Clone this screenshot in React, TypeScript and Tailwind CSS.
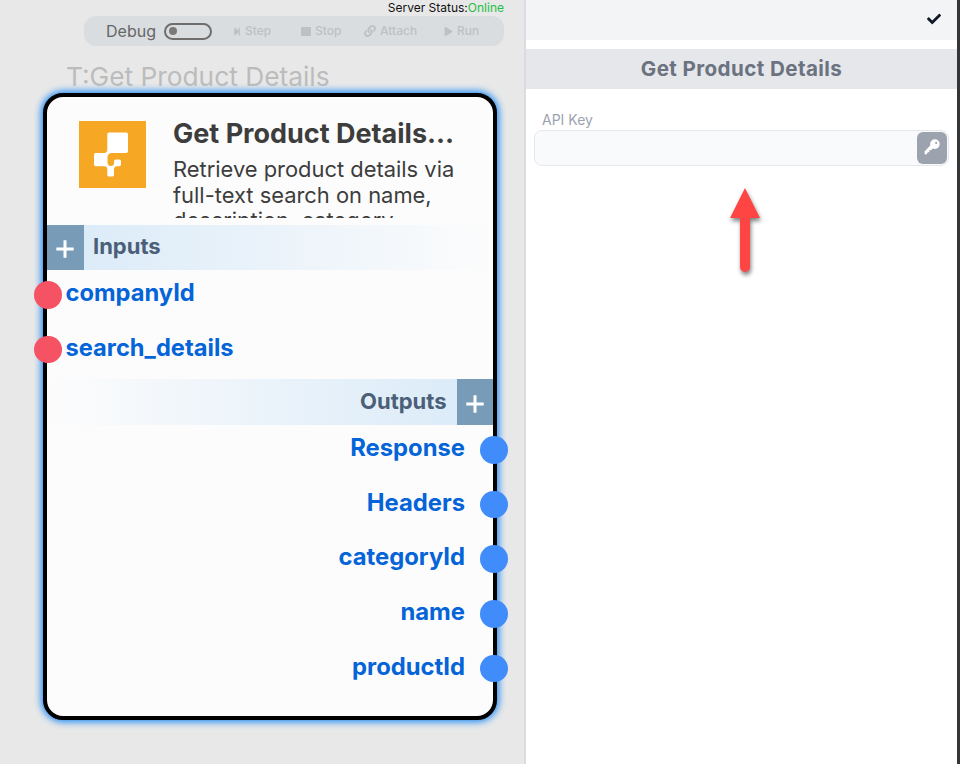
import React from "react";
import { FaCheck, FaLink, FaPlay, FaStepForward } from "react-icons/fa";

const inputs = ["companyId", "search_details"];
const outputs = ["Response", "Headers", "categoryId", "name", "productId"];

function Plus() {
  return (
    <div className="flex h-full w-[36.500px] shrink-0 items-center justify-center bg-[#789cb8] pt-[3px]">
      <svg width="18" height="18" viewBox="0 0 18 18" stroke="#fff" strokeWidth="3">
        <path d="M9 0.3V17.7M0.3 9H17.7" />
      </svg>
    </div>
  );
}

function Logo() {
  return (
    <svg className="mt-[24px] h-[67px] w-[67px] shrink-0" viewBox="0 0 67 67">
      <rect width="67" height="67" fill="#f6a724" />
      <path
        fill="#fff"
        d="M30 11.5H47.3Q49 11.5 49 13.2V30.3Q49 32 47.3 32H33Q28.500 32 28.500 36.500V40.500Q28.500 45 32 45Q35 45 35 42V40.300Q35 38.500 36.800 38.500H40.400Q42 38.500 42 40.300V43.500Q42 45.300 40.200 45.300H38Q35 45.300 35 48.500V54Q35 55.600 33.300 55.600H30Q28.300 55.600 28.300 54V48.500Q28.300 45.300 25 45.300H16.600Q15 45.300 15 43.600V33.700Q15 32 16.600 32H25Q28.300 32 28.300 28.500V13.200Q28.300 11.500 30 11.500Z"
      />
    </svg>
  );
}

function Key() {
  return (
    <svg width="16" height="16" viewBox="0 0 16 16" fill="#fff">
      <path d="M6.4 6.2L0.600 12.400V15.200H2.900L3.500 13.500L5.200 12.900L5.500 11.300L7.300 10.900L9 9.500Z" />
      <circle cx="10.900" cy="5.100" r="4.800" />
      <circle cx="12.200" cy="3.900" r="1.100" fill="#9ca3af" />
    </svg>
  );
}

function Toolbar() {
  return (
    <div className="ml-[84px] flex h-[30px] w-[420px] items-center rounded-[12px] bg-[#d9dde0] font-medium text-[12px] text-[#bfc0c1]">
      <span className="ml-[22px] w-[58px] text-[16px] font-normal text-[#666]">Debug</span>
      <span className="flex h-[17px] w-[48px] items-center rounded-full border-2 border-[#706e6c] pl-[3px]">
        <span className="h-[8px] w-[8px] rounded-full bg-[#7b7a79]" />
      </span>
      <span className="ml-[21px] flex w-[68px] items-center">
        <FaStepForward className="mr-[4px] h-[9px] w-[8px]" />Step
      </span>
      <span className="flex w-[63px] items-center">
        <span className="mr-[4px] h-[9px] w-[10px] bg-[#bfc0c1]" />Stop
      </span>
      <span className="flex w-[80px] items-center">
        <FaLink className="mr-[4px] h-[12px] w-[12px]" />Attach
      </span>
      <span className="flex items-center">
        <FaPlay className="mr-[4px] h-[9px] w-[9px]" />Run
      </span>
    </div>
  );
}

function NodeCard() {
  return (
    <div className="ml-[43px] mt-[1px] flex h-[627px] w-[454px] flex-col rounded-[20px] border-[4px] border-black bg-[#fcfcfc] shadow-[0_0_7px_2px_#1f8bf5]">
      <div className="flex h-[127.500px] shrink-0 pl-[32px]">
        <Logo />
        <div className="ml-[27px] mt-[18px] h-[103px] w-[300px] overflow-hidden text-[#3d3d3d]">
          <div className="h-[41px] text-[27px] font-bold leading-[37px]">Get Product Details…</div>
          <div className="text-[21.900px] leading-[26px]">
            <p>Retrieve product details via</p>
            <p>full-text search on name,</p>
            <p className="-mt-[1px]">description, category</p>
          </div>
        </div>
      </div>
      <div className="flex h-[45.500px] shrink-0 bg-linear-to-r from-[#d9eaf8] to-[#fcfcfc] text-[22px] font-bold leading-[43px] text-[#4b6078]">
        <Plus />
        <span className="ml-[9.500px]">Inputs</span>
      </div>
      <div className="flex h-[109px] shrink-0 flex-col">
        {inputs.map((name) => (
          <div key={name} className="-ml-[13px] flex h-[54.700px] shrink-0 items-start">
            <span className="mt-[11px] h-[27.500px] w-[27.500px] rounded-full bg-[#f55264]" />
            <span className="ml-[4px] text-[23.700px] font-bold leading-[46px] text-[#0464d8]">{name}</span>
          </div>
        ))}
      </div>
      <div className="flex h-[46px] shrink-0 justify-end bg-linear-to-l from-[#d9eaf8] to-[#fcfcfc] text-[22px] font-bold leading-[44px] text-[#4b6078]">
        <span className="mr-[10px]">Outputs</span>
        <Plus />
      </div>
      <div className="flex flex-col">
        {outputs.map((name) => (
          <div key={name} className="-mr-[14.500px] flex h-[54.700px] shrink-0 items-start justify-end">
            <span className="mr-[15px] text-[23.800px] font-bold leading-[46px] text-[#0464d8]">{name}</span>
            <span className="mt-[11px] h-[27.500px] w-[27.500px] rounded-full bg-[#3f8cfa]" />
          </div>
        ))}
      </div>
    </div>
  );
}

function Panel() {
  return (
    <section className="flex h-full w-[431px] flex-col bg-white">
      <div className="flex h-[40px] items-center justify-end bg-[#f3f4f6] pb-[2px] pr-[16px]">
        <FaCheck className="h-[14px] w-[14px] text-[#111827]" />
      </div>
      <h1 className="mt-[9px] h-[40px] bg-[#e5e7eb] text-center text-[20.600px] font-bold leading-[39px] tracking-[0.400px] text-[#6b7280]">
        Get Product Details
      </h1>
      <label className="ml-[16px] mt-[21px] h-[20px] text-[14px] leading-[20px] text-[#9ca3af]">API Key</label>
      <div className="ml-[8px] flex h-[36px] w-[415px] items-center justify-end rounded-[8px] border border-[#e5e7eb] bg-[#f9fafb] pr-[1px]">
        <button className="flex h-[32px] w-[30px] items-center justify-center rounded-[6px] bg-[#9ca3af] pb-[2px]">
          <Key />
        </button>
      </div>
      <svg className="ml-[196px] mt-[16px]" width="46" height="100" viewBox="0 0 46 100">
        <path
          className="drop-shadow-[1px_3px_2px_rgba(0,0,0,0.5)]"
          fill="#ff4444"
          d="M23 6L38 36H28V85A5 5 0 0 1 18 85V36H8Z"
        />
      </svg>
    </section>
  );
}

export default function App() {
  return (
    <main className="flex h-[764px] w-[960px] overflow-hidden bg-[#333537] font-['Inter',sans-serif]">
      <section className="h-full w-[524px] bg-[#e8e8e8]">
        <div className="h-[16px] pr-[20px] text-right text-[12px] leading-[16px] text-[#111]">
          Server Status:<span className="text-[#22bf45]">Online</span>
        </div>
        <Toolbar />
        <div className="ml-[66px] mt-[15px] h-[31px] text-[26.300px] leading-[32px] text-[#bcbcbc]">T:Get Product Details</div>
        <NodeCard />
      </section>
      <div className="w-[2px] bg-[#d9dce1]" />
      <Panel />
    </main>
  );
}
